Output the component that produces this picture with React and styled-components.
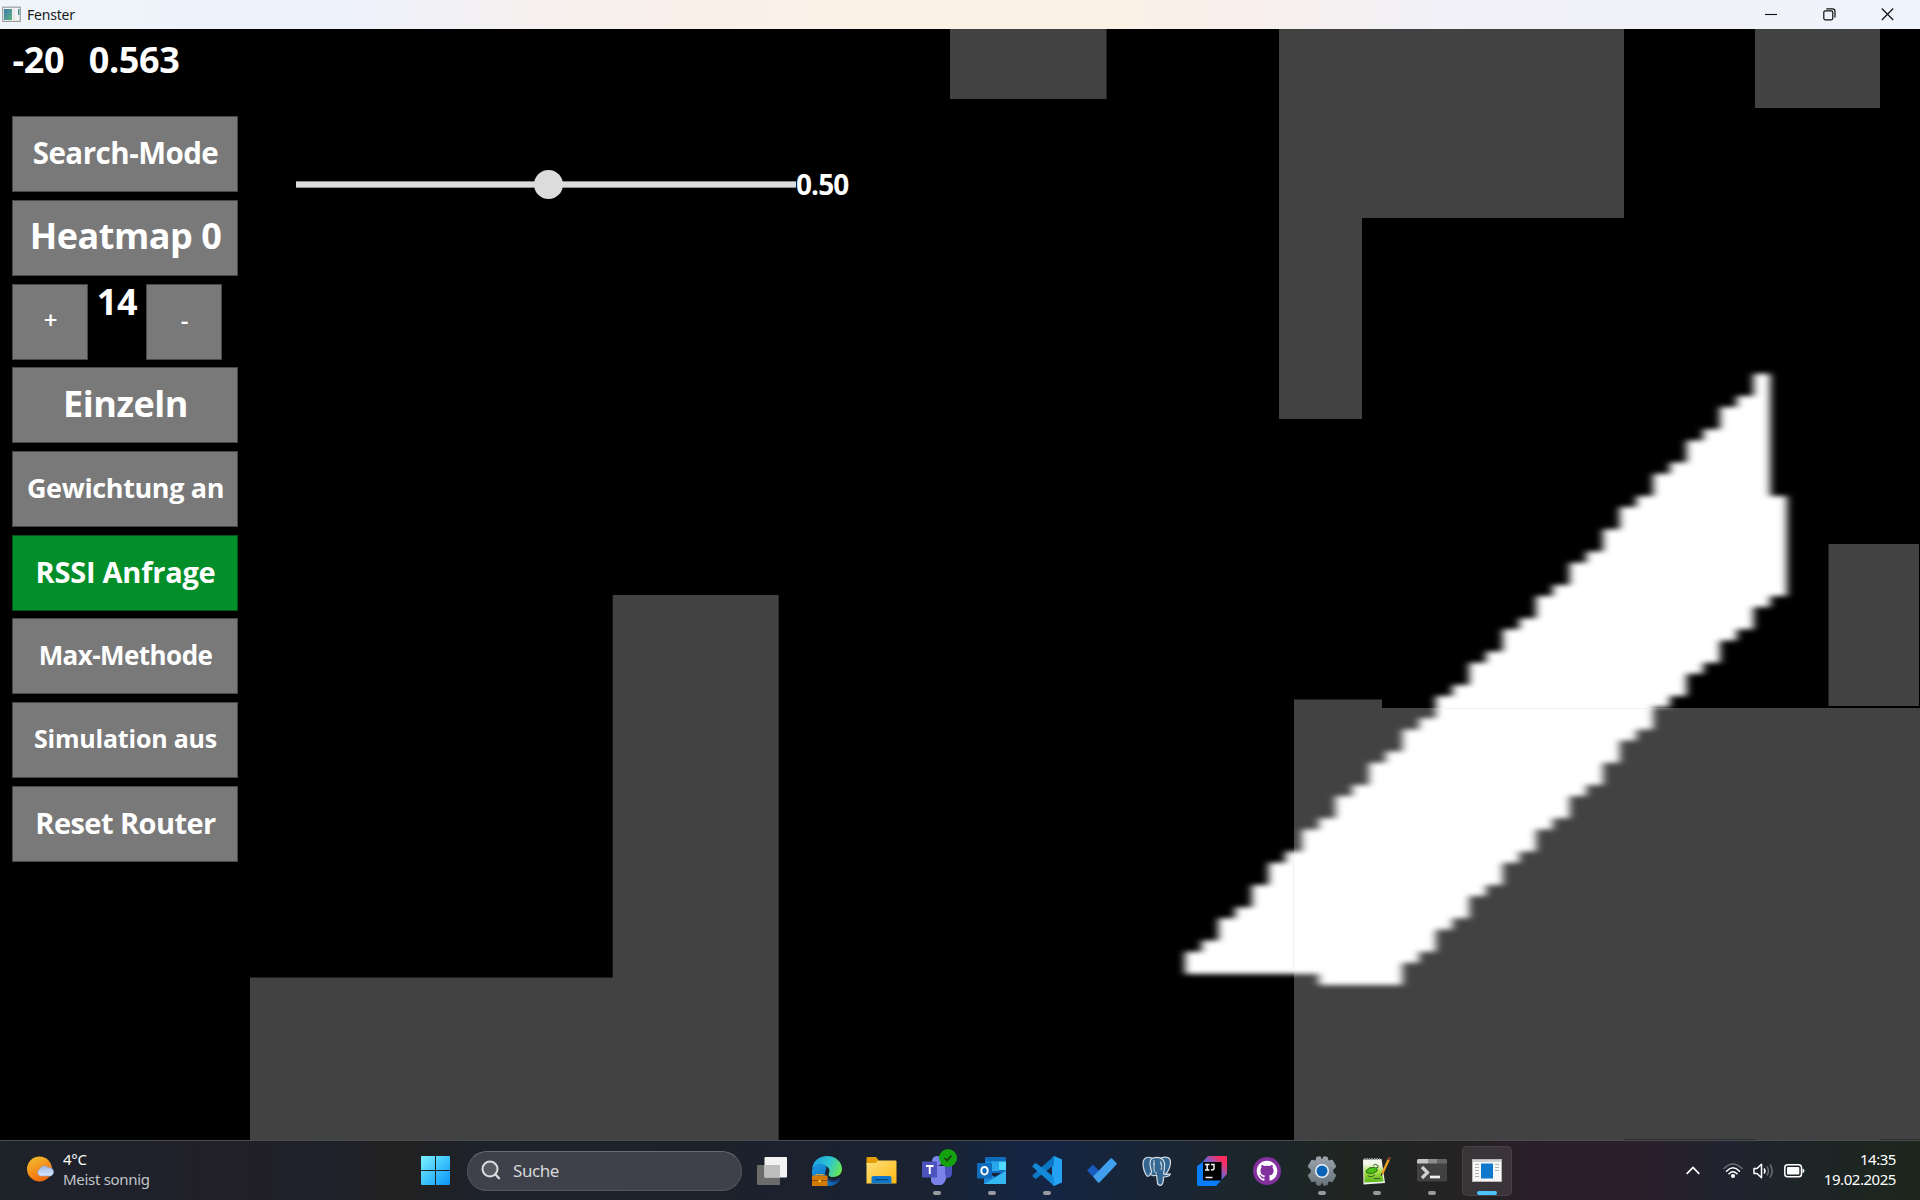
import React from 'react';
import styled, { createGlobalStyle } from 'styled-components';

const GlobalStyle = createGlobalStyle`
  * { box-sizing: border-box; }
  html, body { margin: 0; padding: 0; background: #000; overflow: hidden; }
`;

const Screen = styled.div`
  width: 1920px;
  height: 1200px;
  display: flex;
  flex-direction: column;
  overflow: hidden;
  font-family: "Open Sans", "Noto Sans", sans-serif;
`;

/* ---------- title bar ---------- */
const TitleBar = styled.header`
  height: 29px;
  flex: none;
  display: flex;
  align-items: center;
  padding-left: 2px;
  background: linear-gradient(90deg, #eff4fa 0%, #eef2fb 18%, #f8f0ec 31%, #fbf1e6 46%, #fbf1e6 58%, #f8efec 65%, #f1f1f7 75%, #f0f2f8 90%, #eff3fc 100%);
`;
const Title = styled.span`
  margin-left: 6px;
  font-family: "Noto Sans", sans-serif;
  font-size: 14px;
  letter-spacing: -0.2px;
  line-height: 28px;
  color: #191919;
`;
const WindowButtons = styled.div`
  margin-left: auto;
  display: flex;
  padding-right: 3px;
`;
const WindowButton = styled.span`
  width: 58.5px;
  height: 29px;
  display: flex;
  align-items: center;
  justify-content: center;
`;

/* ---------- map and controls ---------- */
const Stage = styled.main`
  position: relative;
  height: 1111px;
  flex: none;
  background: #000;
`;
const MapDrawing = styled.svg`
  position: absolute;
  inset: 0;
  display: block;
`;
const Overlay = styled.div`
  position: relative;
  display: flex;
  align-items: flex-start;
`;
const Sidebar = styled.aside`
  width: 296px;
  padding-left: 12px;
`;
const Readout = styled.div`
  height: 87.3px;
  display: flex;
  gap: 24.500px;
  padding: 4px 0 0 .5px;
  color: #fff;
  font-size: 36px;
  line-height: 53px;
  font-weight: 700;
  letter-spacing: -0.35px;
`;
const ButtonStack = styled.div`
  display: flex;
  flex-direction: column;
  gap: 7.67px;
`;
const StepperRow = styled.div`
  display: flex;
`;
const Button = styled.div`
  width: ${(p) => p.$width || 226}px;
  height: 76px;
  display: flex;
  align-items: center;
  justify-content: center;
  background: ${(p) => (p.$active ? '#028e29' : '#797979')};
  box-shadow: inset 0 0 0 1px rgba(0, 0, 0, 0.4);
  color: #fff;
  font-size: ${(p) => p.$size}px;
  font-weight: ${(p) => p.$weight || 700};
  letter-spacing: ${(p) => p.$tracking || 0}px;
  line-height: 1;
  white-space: nowrap;
  padding-bottom: 3px;
  padding-left: 1px;
`;
const StepValue = styled.div`
  width: 58px;
  text-align: center;
  color: #fff;
  font-size: 36px;
  font-weight: 700;
  letter-spacing: -0.4px;
  line-height: 36px;
`;
const SliderRow = styled.div`
  display: flex;
  align-items: center;
  height: 40px;
  margin-top: 135px;
`;
const Track = styled.div`
  width: 500px;
  height: 7px;
  display: flex;
  align-items: center;
  justify-content: center;
  background: #dcdcdc;
  box-shadow: inset 0 1px 0 #8c8c8c, inset 0 -1px 0 #8c8c8c;
`;
const Thumb = styled.div`
  width: 29px;
  height: 29px;
  margin-left: 5px;
  flex: none;
  border-radius: 50%;
  background: #dcdcdc;
`;
const SliderValue = styled.span`
  color: #fff;
  font-size: 28px;
  line-height: 38px;
  font-weight: 700;
  letter-spacing: -0.9px;
`;

/* ---------- taskbar ---------- */
const Taskbar = styled.footer`
  height: 60px;
  flex: none;
  display: flex;
  align-items: center;
  border-top: 1px solid #4a4c50;
  color: #fff;
  font-family: "Noto Sans", sans-serif;
  background: linear-gradient(90deg, #1e2229 0%, #1f212a 8%, #221f27 11.5%, #1e212b 17%, #222120 20.5%, #1e222b 25%, #1c212c 38%, #1a2231 48%, #142544 54%, #1a2533 61%, #1b2629 66%, #202522 70%, #232323 75%, #2a1f29 80%, #2a1f2b 85%, #212330 90%, #1d2527 94%, #1d261c 100%);
`;
const Weather = styled.div`
  width: 408px;
  display: flex;
  align-items: center;
  padding-left: 26px;
  gap: 8px;
`;
const WeatherText = styled.div`
  display: flex;
  flex-direction: column;
  font-size: 15px;
  line-height: 20px;
  letter-spacing: -0.3px;
  padding-bottom: 4px;
`;
const Muted = styled.span`
  color: #c3c5c9;
`;
const StartSlot = styled.div`
  width: 59px;
  display: flex;
  padding-left: 13px;
`;
const SearchBox = styled.div`
  width: 275px;
  height: 40px;
  display: flex;
  align-items: center;
  gap: 12px;
  padding-left: 13px;
  padding-bottom: 1px;
  border-radius: 20px;
  border: 1px solid #54575e;
  border-top-color: #6a6c73;
  background: #3e4149;
  color: #d6d7d9;
  font-size: 17px;
  letter-spacing: -0.45px;
`;
const Apps = styled.div`
  display: flex;
  margin-left: 2px;
`;
const AppSlot = styled.div`
  position: relative;
  width: 55px;
  height: 50px;
  display: flex;
  align-items: center;
  justify-content: center;
`;
const AppTile = styled.div`
  width: 50px;
  height: 50px;
  display: flex;
  align-items: center;
  justify-content: center;
  border-radius: 5px;
  background: ${(p) => (p.$active ? 'rgba(255,255,255,.09)' : 'transparent')};
  border: 1px solid ${(p) => (p.$active ? 'rgba(255,255,255,.07)' : 'transparent')};
`;
const Indicator = styled.span`
  position: absolute;
  bottom: 1px;
  left: 50%;
  transform: translateX(-50%);
  width: ${(p) => (p.$active ? 20 : 8)}px;
  height: 4px;
  border-radius: 2px;
  background: ${(p) => (p.$active ? '#4cc2ff' : '#979b9f')};
`;
const Tray = styled.div`
  margin-left: auto;
  display: flex;
  align-items: center;
  padding-right: 24px;
`;
const TrayIcons = styled.div`
  display: flex;
  align-items: center;
  gap: 10px;
  margin-left: 23px;
`;
const Clock = styled.div`
  width: 91px;
  text-align: right;
  font-size: 15px;
  line-height: 20px;
  letter-spacing: -0.45px;
  padding-bottom: 4px;
`;

/* ---------- detection beam, built from grid cells ---------- */
const CELL_W = 16.72;
const CELL_H = 11.115;
const ORIGIN_X = 1185;
const ORIGIN_Y = 373.7 - 29;
const DOUBLE_LEFT = [2, 4, 5, 7, 9, 11, 13, 15, 17, 19, 21, 23, 25, 26, 28, 30, 32, 34];
const BOTTOMS = [
  54, 54, 54, 54, 54, 54, 54, 54, 55, 55, 55, 55, 55, 53, 52, 50, 49, 47,
  46, 44, 43, 41, 40, 38, 37, 35, 33, 32, 30, 29, 27, 26, 24, 23, 21, 20,
];
function beamPath() {
  const tops = [];
  let row = 52;
  for (let k = 0; k < 35; k += 1) {
    if (k > 0) row -= DOUBLE_LEFT.includes(k) ? 2 : 1;
    tops.push(row);
  }
  tops.push(11);
  const x = (k) => (ORIGIN_X + k * CELL_W).toFixed(1);
  const y = (r) => (ORIGIN_Y + r * CELL_H).toFixed(1);
  const pts = [];
  tops.forEach((t, k) => pts.push(`${x(k)},${y(t)}`, `${x(k + 1)},${y(t)}`));
  for (let k = 35; k >= 0; k -= 1) pts.push(`${x(k + 1)},${y(BOTTOMS[k])}`, `${x(k)},${y(BOTTOMS[k])}`);
  return `M${pts.join('L')}Z`;
}

const FloorMap = () => (
  <MapDrawing width="1920" height="1111" viewBox="0 0 1920 1111">
    <defs>
      <filter id="soft" x="-5%" y="-5%" width="110%" height="110%">
        <feGaussianBlur stdDeviation="4.3 2.9" />
      </filter>
    </defs>
    <g fill="#424242">
      <rect x="950" y="0" width="156.5" height="70" />
      <path d="M1279 0H1624V189H1362V390H1279Z" />
      <rect x="1755" y="0" width="125" height="79" />
      <rect x="1828.5" y="515" width="90.500" height="162" />
      <path d="M1294 670.5H1382V679H1920V1111H1294Z" />
      <path d="M612.700 566H778.700V1111H250V948.5H612.700Z" />
    </g>
    <path d={beamPath()} fill="#fff" filter="url(#soft)" />
    <path d="M1293.500 830V940M1444 679.5H1648" stroke="#f1f1f1" strokeWidth="1" fill="none" />
    <path d="M1624 1110.5H1755M1880 1110.5H1920" stroke="#2c2c2c" fill="none" />
  </MapDrawing>
);

/* ---------- icons ---------- */
const WindowIcon = () => (
  <svg width="19" height="17" viewBox="0 0 19 17">
    <defs><linearGradient id="wi" x1="0" y1="0" x2="1" y2="1"><stop offset="0" stopColor="#3c7cb0" /><stop offset="1" stopColor="#5cb37c" /></linearGradient></defs>
    <rect x=".7" y="1.2" width="17.6" height="14.2" fill="#f3f3f3" stroke="#9c9fa1" strokeWidth="1.2" />
    <rect x="2" y="3" width="8" height="11" fill="url(#wi)" />
    <path d="M12 3v11" stroke="#dcdcdc" />
    <rect x="16" y="3" width="1.5" height="6" fill="url(#wi)" />
  </svg>
);
const WeatherIcon = () => (
  <svg width="29" height="29" viewBox="0 0 29 29">
    <defs>
      <linearGradient id="sun" x1=".2" y1="0" x2=".7" y2="1"><stop offset="0" stopColor="#f2bb2f" /><stop offset="1" stopColor="#f5660a" /></linearGradient>
      <linearGradient id="cl" x1="0" y1="0" x2="0" y2="1"><stop offset="0" stopColor="#9db8ea" /><stop offset="1" stopColor="#dbe9fb" /></linearGradient>
    </defs>
    <circle cx="13.5" cy="13" r="12.5" fill="url(#sun)" />
    <path d="M14.500 20a3.700 3.700 0 0 1-.6-7 4.800 4.800 0 0 1 8.300-1.200 4.200 4.200 0 0 1 2.300 8.200Z" fill="url(#cl)" stroke="#7f9fdc" strokeWidth=".6" />
  </svg>
);
const StartIcon = () => (
  <svg width="29" height="29" viewBox="0 0 29 29">
    <defs><linearGradient id="st" gradientUnits="userSpaceOnUse" x1="0" y1="0" x2="29" y2="29"><stop offset="0" stopColor="#7df2ff" /><stop offset=".5" stopColor="#3fc4fb" /><stop offset="1" stopColor="#0a93fb" /></linearGradient></defs>
    <path d="M1 0H14V14H0V1Q0 0 1 0ZM15 0H28Q29 0 29 1V14H15ZM0 15H14V29H1Q0 29 0 28ZM15 15H29V28Q29 29 28 29H15Z" fill="url(#st)" />
  </svg>
);
const SearchIcon = () => (
  <svg width="20" height="20" viewBox="0 0 20 20" fill="none" stroke="#dcdcde" strokeWidth="2" strokeLinecap="round">
    <circle cx="9" cy="9" r="7.500" fill="#575a61" /><path d="M14.500 14.500L18 18.200" strokeWidth="2.400" />
  </svg>
);
const TaskViewIcon = () => (
  <svg width="30" height="28" viewBox="0 0 30 28">
    <rect x="0" y="8" width="23" height="20" rx="1" fill="#6b6b6b" />
    <rect x="7.500" y="0" width="22.500" height="20.500" rx="1" fill="#f2f2f2" />
    <path d="M7.500 8H23V20.500H7.500Z" fill="#bdbdbd" />
  </svg>
);
const EdgeIcon = () => (
  <svg width="30" height="30" viewBox="0 0 30 30">
    <defs>
      <linearGradient id="e1" x1="0" y1=".3" x2="1" y2=".6"><stop offset="0" stopColor="#1d9fe0" /><stop offset=".55" stopColor="#2fc6cf" /><stop offset="1" stopColor="#6ae653" /></linearGradient>
      <linearGradient id="e2" x1="0" y1="0" x2="1" y2="1"><stop offset="0" stopColor="#1a9be8" /><stop offset="1" stopColor="#0b59a6" /></linearGradient>
    </defs>
    <path d="M0 13C1 5 7 0 15 0c9 0 15 6 15 13 0 5-4 8-9 8-4 0-5-2-4-4 2-4-2-8-8-8C5 9 2 10 0 13Z" fill="url(#e1)" />
    <path d="M0 14C2 9 6 7 10 8c4 .6 5 3 4 6-3 6 2 13 9 12 2 0 4-.8 5-1.500C24 29 19 31 13 30 5 29-1 22 0 14Z" fill="url(#e2)" />
    <path d="M14 13c-2 5 1 10 6 11 3 .7 6-.5 8-2 1 0 0 1.500-1 3-3 2-9 2-12-2-2-3-3-7-1-10Z" fill="#123f7a" />
    <rect x="0" y="19.500" width="15.500" height="10.500" fill="#d37b08" /><path d="M0 24.500H15.500" stroke="#8f4d05" /><path d="M4 19.500V18.500H11V19.500" stroke="#e99f23" fill="none" /><circle cx="7.700" cy="25" r="1.200" fill="#ffd636" />
  </svg>
);
const FolderIcon = () => (
  <svg width="31" height="27" viewBox="0 0 31 27">
    <defs><linearGradient id="fo" x1="0" y1="0" x2="1" y2="1"><stop offset="0" stopColor="#ffe07a" /><stop offset="1" stopColor="#fcb813" /></linearGradient></defs>
    <path d="M.5 1Q.5 0 1.500 0H10l3 3.500V8H.5Z" fill="#e3a008" />
    <path d="M.5 6H9.500L12.500 3.500H29.500Q30.500 3.500 30.500 4.500V26.500H.5Z" fill="url(#fo)" />
    <path d="M5.500 26.500V21Q5.500 19 7.500 19H23.500Q25.500 19 25.500 21V26.500Z" fill="#0f78cc" /><path d="M9 22.700H22.500" stroke="#07477f" strokeWidth="1.300" />
  </svg>
);
const TeamsIcon = () => (
  <svg width="36" height="36" viewBox="0 0 36 36">
    <circle cx="16" cy="12" r="5" fill="#7b83eb" />
    <path d="M22 17H31V24Q31 29 26 29H22Z" fill="#4b53bc" />
    <path d="M10 17H24V25a7 7 0 0 1-14 7.500Z" fill="#7b83eb" />
    <rect x="1" y="12.500" width="15" height="16" rx="1" fill="#4b53bc" />
    <path d="M5 17H12.500M8.750 17V25" stroke="#fff" strokeWidth="2" />
    <circle cx="27" cy="9" r="9" fill="#13a10e" /><path d="M23.500 9l2.500 2.500 4.500-5" fill="none" stroke="#17391a" strokeWidth="1.700" />
  </svg>
);
const OutlookIcon = () => (
  <svg width="30" height="28" viewBox="0 0 30 28">
    <path d="M8 1Q8 0 9 0H28Q29 0 29 1V16H8Z" fill="#0f6cbd" /><path d="M8 4.500H22V11H8Z" fill="#1490df" /><path d="M15 4.500H22V14H15Z" fill="#28a8ea" /><path d="M22 4.500H29V13H22Z" fill="#50d9ff" />
    <path d="M7 14L18 20 29 13V27H7Z" fill="#1a86d9" /><path d="M7 27L29 14V27Z" fill="#35b8f1" />
    <rect x="0" y="6" width="15" height="15.500" rx="1" fill="#0f6cbd" /><ellipse cx="7.500" cy="13.700" rx="3.200" ry="3.800" fill="none" stroke="#fff" strokeWidth="2" />
  </svg>
);
const CodeIcon = () => (
  <svg width="30" height="30" viewBox="0 0 30 30">
    <path d="M22 0L30 3.500V26.500L22 30 20 28V2Z" fill="#24a3f2" />
    <path d="M22 0V9L4.500 22.500Q3.500 23 2.800 22.400L.7 20.500Q0 19.700.8 19Z" fill="#0b78c6" />
    <path d="M22 30V21L4.500 7.500Q3.500 7 2.800 7.600L.7 9.500Q0 10.300.8 11Z" fill="#138ad8" />
  </svg>
);
const TodoIcon = () => (
  <svg width="30" height="26" viewBox="0 0 30 26">
    <path d="M0 12.500L6 6.500 17 18 11.500 24.500Z" fill="#185abd" /><path d="M6 18.500L23.500.5Q24.500 0 25.300.8L29.500 5Q30 5.800 29.500 6.500L12.500 24.500Q11.500 25 10.700 24.300Z" fill="#41a0ee" />
  </svg>
);
const PostgresIcon = () => (
  <svg width="30" height="30" viewBox="0 0 30 30" fill="#336791" stroke="#d5dde4" strokeWidth="1.200" strokeLinejoin="round">
    <path d="M10 2C5 0 1 2 1 8c0 4 2 10 4 12 2 1 4-2 5-4Z" /><path d="M19 2c5-2 10-1 9.500 5C28 12 26 16 23 19l-4-1Z" />
    <path d="M9 3C14 0 21 1 22.500 7c.5 4-.5 8-1 11 2 1 5 0 7 0-1 2-4 3-7 3 0 3-.3 6-1.500 7.500-1.500 1.500-4 .8-4.500-1.500L14.500 19c-2 1-5 1-6.500-1.500 2 0 2-2 1-4C8 10 7.500 6 9 3Z" />
    <path d="M12 4v9c0 3 1 4 3 4M18 5c2 3 2 5 1 9M11 8h2M18 8h2" fill="none" strokeWidth="1" />
  </svg>
);
const IdeaIcon = () => (
  <svg width="30" height="30" viewBox="0 0 30 30">
    <defs><linearGradient id="ij" x1="0" y1="1" x2="1" y2="0"><stop offset=".35" stopColor="#087cfa" /><stop offset=".6" stopColor="#7b5fc8" /><stop offset=".85" stopColor="#fe2d60" /></linearGradient></defs>
    <path d="M0 12L11 0H30V18L19 30H2Q0 30 0 28Z" fill="url(#ij)" /><path d="M0 10L6 6V24H24L19 30H2Q0 30 0 28Z" fill="#087cfa" /><rect x="6" y="6" width="18.500" height="18.500" fill="#000" />
    <path d="M8 8.500H12.500M10.200 8.500V14M8 14H12.500M14 8.500H17V12.500Q17 14 14 14M8.500 21.500H15.500" stroke="#fff" strokeWidth="1.400" fill="none" />
  </svg>
);
const GithubIcon = () => (
  <svg width="28" height="28" viewBox="0 0 28 28">
    <circle cx="14" cy="14" r="14" fill="#81309d" />
    <path transform="translate(3.700 3.700) scale(1.290)" fill="#fff" d="M8 0C3.580 0 0 3.580 0 8c0 3.540 2.290 6.530 5.470 7.590.4.070.55-.17.55-.38 0-.19-.01-.82-.01-1.490-2.010.37-2.530-.49-2.690-.94-.09-.23-.48-.94-.82-1.130-.28-.15-.68-.52-.01-.53.63-.01 1.080.58 1.230.82.72 1.210 1.870.87 2.330.66.07-.52.28-.87.51-1.070-1.780-.2-3.640-.89-3.640-3.950 0-.87.31-1.590.82-2.150-.08-.2-.36-1.020.08-2.120 0 0 .67-.21 2.200.82a7.500 7.500 0 0 1 4 0c1.530-1.040 2.200-.82 2.200-.82.44 1.100.16 1.920.08 2.120.51.56.82 1.270.82 2.150 0 3.070-1.870 3.750-3.650 3.950.29.25.54.73.54 1.480 0 1.070-.01 1.930-.01 2.200 0 .21.15.46.55.38A8 8 0 0 0 16 8c0-4.420-3.580-8-8-8Z" />
  </svg>
);
const SettingsIcon = () => (
  <svg width="30" height="30" viewBox="0 0 30 30">
    <defs><linearGradient id="ge" x1="0" y1="0" x2="0" y2="1"><stop offset="0" stopColor="#9aa3ab" /><stop offset="1" stopColor="#69737c" /></linearGradient></defs>
    <path d="M10 1.500L13 1 14 3.500H16L17 1 20 1.500 21 5.500 25 4.500 28.500 10.500 25.500 13.500V16.500L28.500 19.500 25 25.500 21 24.500 20 28.500 17 29 16 26.500H14L13 29 10 28.500 9 24.500 5 25.500 1.500 19.500 4.500 16.500V13.500L1.500 10.500 5 4.500 9 5.500Z" fill="url(#ge)" stroke="url(#ge)" strokeWidth="1.500" strokeLinejoin="round" />
    <circle cx="15" cy="15" r="7" fill="#edf2f5" /><circle cx="15" cy="15" r="5.500" fill="#0b62b8" />
  </svg>
);
const NotepadIcon = () => (
  <svg width="29" height="28" viewBox="0 0 29 28">
    <defs><linearGradient id="np" x1="0" y1="0" x2="0" y2="1"><stop offset=".15" stopColor="#f3f7ea" /><stop offset=".5" stopColor="#a7dd45" /><stop offset="1" stopColor="#57b515" /></linearGradient></defs>
    <path d="M1 2.500L19.500 2 23 26 1.500 27.500Z" fill="#f2f2ee" /><path d="M2 4L19 4 21.500 24.500 2.500 25.500Z" fill="url(#np)" />
    <path d="M2 2H18" stroke="#9b9b9b" strokeWidth="2" strokeDasharray="1.500 1" />
    <path d="M4 14Q7 9.500 12 10.500 16 11 15 14 11 18 5 16Z" fill="#4fc01a" stroke="#2c6a17" strokeWidth="1" />
    <path d="M11 8.500Q13 6 16 8.500 17 11 14 11M6 19Q10 21 13 18M12 21.500H18" fill="none" stroke="#3b5d30" strokeWidth="1" />
    <path d="M20 17L27 2" stroke="#e8a11f" strokeWidth="2.400" /><path d="M26.500 3L28 0" stroke="#81412a" strokeWidth="2.400" /><path d="M19 19L20 16" stroke="#333" />
  </svg>
);
const TerminalIcon = () => (
  <svg width="30" height="23" viewBox="0 0 30 23">
    <rect width="30" height="22.500" rx="1.500" fill="#414141" /><path d="M0 1.500Q0 0 1.500 0H11V4.500H0Z" fill="#c4c4c4" /><path d="M11 0H20V4.500H11Z" fill="#8d8d8d" /><path d="M20 0H28.500Q30 0 30 1.500V4.500H20Z" fill="#666" />
    <path d="M5 8L10.500 13.500 5 19" fill="none" stroke="#d0d0d0" strokeWidth="3.200" /><path d="M13 18H23" stroke="#f2f2f2" strokeWidth="2.700" />
  </svg>
);
const AppWindowIcon = () => (
  <svg width="30" height="23" viewBox="0 0 30 23">
    <rect x=".5" y=".5" width="29" height="22" fill="#f7f7f7" stroke="#b9b9b9" /><path d="M1 2H29" stroke="#d0d0d0" strokeWidth="2" />
    <rect x="9" y="4.500" width="12" height="15" fill="#0f78cc" />
    <path d="M3 5.500H7M3 8.500H7M3 11.500H7M3 14.500H7M3 17.500H7M23 5.500H27M23 8.500H27M23 11.500H27" stroke="#b0b0b0" />
  </svg>
);

const APPS = [
  { id: 'taskview', icon: TaskViewIcon },
  { id: 'edge', icon: EdgeIcon },
  { id: 'explorer', icon: FolderIcon },
  { id: 'teams', icon: TeamsIcon, open: true, nudge: true },
  { id: 'outlook', icon: OutlookIcon, open: true },
  { id: 'code', icon: CodeIcon, open: true },
  { id: 'todo', icon: TodoIcon },
  { id: 'postgres', icon: PostgresIcon },
  { id: 'idea', icon: IdeaIcon },
  { id: 'github', icon: GithubIcon },
  { id: 'settings', icon: SettingsIcon, open: true },
  { id: 'notepad', icon: NotepadIcon, open: true },
  { id: 'terminal', icon: TerminalIcon, open: true },
  { id: 'fenster', icon: AppWindowIcon, open: true, active: true },
];
const IconBox = styled.span`
  display: flex;
  padding: ${(p) => (p.$raised ? '0 0 7px 4px' : '0')};
`;

export default function App() {
  return (
    <Screen>
      <GlobalStyle />
      <TitleBar>
        <WindowIcon />
        <Title>Fenster</Title>
        <WindowButtons>
          <WindowButton>
            <svg width="12" height="12" viewBox="0 0 12 12" stroke="#111" strokeWidth="1.100"><path d="M0 5.500H12" /></svg>
          </WindowButton>
          <WindowButton>
            <svg width="13" height="13" viewBox="0 0 13 13" fill="none" stroke="#111" strokeWidth="1.200"><rect x=".8" y="2.800" width="9" height="9" rx="1.500" /><path d="M3.300 .8H9.500Q12 .8 12 3.300V9.500" /></svg>
          </WindowButton>
          <WindowButton>
            <svg width="13" height="13" viewBox="0 0 13 13" stroke="#111" strokeWidth="1.200"><path d="M.8.5L12.200 12M12.200.5L.8 12" /></svg>
          </WindowButton>
        </WindowButtons>
      </TitleBar>

      <Stage>
        <FloorMap />
        <Overlay>
          <Sidebar>
            <Readout><span>-20</span><span>0.563</span></Readout>
            <ButtonStack>
              <Button $size={29.5} $tracking={-0.5}>Search-Mode</Button>
              <Button $size={36} $tracking={-0.5}>Heatmap 0</Button>
              <StepperRow>
                <Button $width={76} $size={24} $weight={600}>+</Button>
                <StepValue>14</StepValue>
                <Button $width={76} $size={24} $weight={600}>-</Button>
              </StepperRow>
              <Button $size={36} $tracking={-0.45}>Einzeln</Button>
              <Button $size={27} $tracking={-0.38}>Gewichtung an</Button>
              <Button $size={29} $tracking={-0.22} $active>RSSI Anfrage</Button>
              <Button $size={26} $tracking={-0.55}>Max-Methode</Button>
              <Button $size={25} $tracking={-0.22}>Simulation aus</Button>
              <Button $size={29} $tracking={-0.55}>Reset Router</Button>
            </ButtonStack>
          </Sidebar>
          <SliderRow>
            <Track><Thumb /></Track>
            <SliderValue>0.50</SliderValue>
          </SliderRow>
        </Overlay>
      </Stage>

      <Taskbar>
        <Weather>
          <WeatherIcon />
          <WeatherText><span>4°C</span><Muted>Meist sonnig</Muted></WeatherText>
        </Weather>
        <StartSlot><StartIcon /></StartSlot>
        <SearchBox><SearchIcon /><span>Suche</span></SearchBox>
        <Apps>
          {APPS.map(({ id, icon: Icon, open, active, nudge }) => (
            <AppSlot key={id}>
              <AppTile $active={active}><IconBox $raised={nudge}><Icon /></IconBox></AppTile>
              {open && <Indicator $active={active} />}
            </AppSlot>
          ))}
        </Apps>
        <Tray>
          <svg width="14" height="9" viewBox="0 0 14 9" fill="none" stroke="#fff" strokeWidth="1.700"><path d="M.7 7.800L7 1.500 13.300 7.800" /></svg>
          <TrayIcons>
            <svg width="20" height="16" viewBox="0 0 20 16" fill="none" stroke="#fff" strokeWidth="1.500" strokeLinecap="round">
              <path d="M1 5.500Q10-3.500 19 5.500" stroke="#6a6d70" /><path d="M3.500 8.200Q10 1.500 16.500 8.200M6 10.800Q10 6.500 14 10.800" /><circle cx="10" cy="13" r="1.300" fill="#fff" />
            </svg>
            <svg width="21" height="16" viewBox="0 0 21 16" fill="none" stroke="#fff" strokeWidth="1.500" strokeLinejoin="round">
              <path d="M1 5.500H4L8.500 1.200V14.800L4 10.500H1Z" /><path d="M11 5.500Q13 8 11 10.500" /><path d="M14 3.500Q17 8 14 12.500M17 1.500Q21.500 8 17 14.500" stroke="#6a6d70" />
            </svg>
            <svg width="21" height="14" viewBox="0 0 21 14"><rect x=".8" y=".8" width="16.700" height="12" rx="2.800" fill="none" stroke="#fff" strokeWidth="1.500" /><rect x="3" y="3" width="12.300" height="7.600" rx="1" fill="#fff" /><path d="M18.500 4.500Q20.500 4.800 20.500 6.800T18.500 9.200Z" fill="#fff" /></svg>
          </TrayIcons>
          <Clock>14:35<br />19.02.2025</Clock>
        </Tray>
      </Taskbar>
    </Screen>
  );
}
